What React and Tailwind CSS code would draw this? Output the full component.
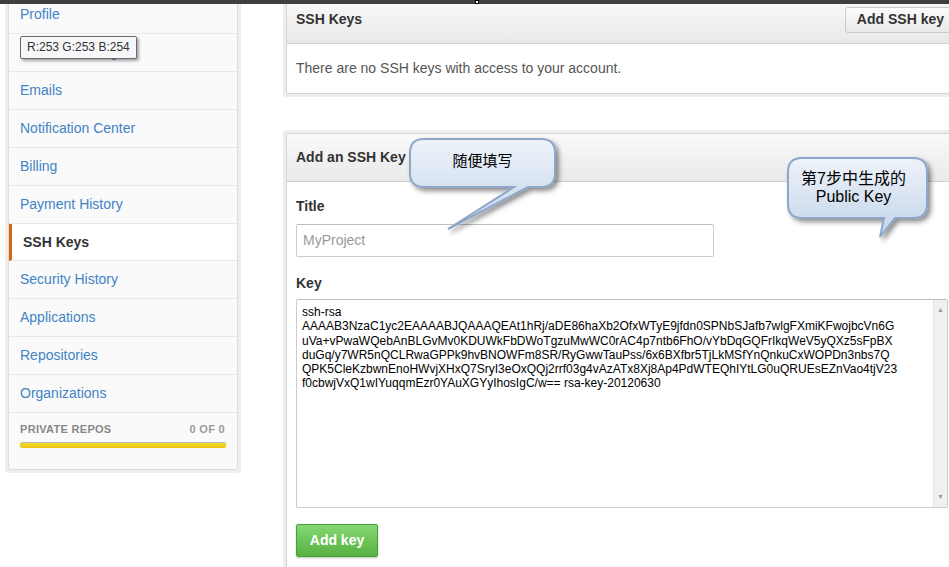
const NAV = [
  "Profile",
  "Account Settings",
  "Emails",
  "Notification Center",
  "Billing",
  "Payment History",
  "SSH Keys",
  "Security History",
  "Applications",
  "Repositories",
  "Organizations",
];

const KEY_LINES = [
  "ssh-rsa",
  "AAAAB3NzaC1yc2EAAAABJQAAAQEAt1hRj/aDE86haXb2OfxWTyE9jfdn0SPNbSJafb7wlgFXmiKFwojbcVn6G",
  "uVa+vPwaWQebAnBLGvMv0KDUWkFbDWoTgzuMwWC0rAC4p7ntb6FhO/vYbDqGQFrIkqWeV5yQXz5sFpBX",
  "duGq/y7WR5nQCLRwaGPPk9hvBNOWFm8SR/RyGwwTauPss/6x6BXfbr5TjLkMSfYnQnkuCxWOPDn3nbs7Q",
  "QPK5CleKzbwnEnoHWvjXHxQ7SryI3eOxQQj2rrf03g4vAzATx8Xj8Ap4PdWTEQhIYtLG0uQRUEsEZnVao4tjV23",
  "f0cbwjVxQ1wIYuqqmEzr0YAuXGYyIhosIgC/w== rsa-key-20120630",
];

function Sidebar() {
  return (
    <div className="ml-[5px] w-[236px] shrink-0 rounded-[4px] bg-[#eeeeee] p-[3px]">
      <div className="relative rounded-[3px] border border-[#dddddd] bg-[#fafafb]">
        {NAV.map((item) =>
          item === "SSH Keys" ? (
            <div
              key={item}
              className="flex h-[37px] items-center border-b border-l-[3px] border-b-[#e8e8e8] border-l-[#d26911] bg-white pl-[11px] text-[14px] font-bold text-[#333]"
            >
              {item}
            </div>
          ) : (
            <div
              key={item}
              className="flex h-[38px] items-center border-b border-[#e8e8e8] pl-[11px] text-[14px] text-[#4183c4]"
            >
              {item}
            </div>
          )
        )}
        <div className="h-[56px] px-[11px] pt-[8px]">
          <div className="flex items-center justify-between text-[11px] font-bold tracking-[0.3px] text-[#888]">
            <span>PRIVATE REPOS</span>
            <span className="mr-[1px] text-[#999]">0 OF 0</span>
          </div>
          <div className="mt-[4px] h-[6px] rounded-[2px] border-t border-[#b8b8b8] bg-gradient-to-b from-[#f6dc2a] to-[#e6c20c]" />
        </div>

        {/* colour picker tooltip over the Account Settings row */}
        <div className="absolute left-[11px] top-[40px] rounded-[2px] border border-[#6b6b6b] bg-[#f7f7f9] px-[6px] py-[3px] text-[12px] leading-[15px] text-[#333] shadow-[2px_2px_3px_rgba(0,0,0,0.35)]">
          R:253 G:253 B:254
        </div>
      </div>
    </div>
  );
}

function Panel({ children }) {
  return (
    <div className="rounded-[4px] bg-[#eeeeee] p-[3px]">
      <div className="overflow-hidden rounded-[3px] border border-[#d5d5d5] bg-white">{children}</div>
    </div>
  );
}

function PanelHeader({ title, children }) {
  return (
    <div className="flex h-[48px] items-center justify-between border-b border-[#cfcfcf] bg-gradient-to-b from-[#fafafa] to-[#e9e9e9] pl-[9px] pr-[3px]">
      <span className="text-[14px] font-bold text-[#333]">{title}</span>
      {children}
    </div>
  );
}

function Callout1() {
  return (
    <div className="absolute left-[400px] top-[130px] h-[110px] w-[170px]">
      <svg width="170" height="110" className="absolute left-0 top-0">
        <defs>
          <linearGradient id="c1" x1="0" y1="0" x2="0" y2="1">
            <stop offset="0" stopColor="#eef3fa" />
            <stop offset="1" stopColor="#c3d4ea" />
          </linearGradient>
          <filter id="s1" x="-20%" y="-20%" width="150%" height="160%">
            <feDropShadow dx="3" dy="3" stdDeviation="2.5" floodColor="#000" floodOpacity="0.45" />
          </filter>
        </defs>
        <path
          d="M24 9 H141 Q155 9 155 23 V43 Q155 57 141 57 H128 L48 99 L114 57 H24 Q10 57 10 43 V23 Q10 9 24 9 Z"
          fill="url(#c1)"
          stroke="#8ea7c9"
          strokeWidth="2"
          filter="url(#s1)"
        />
      </svg>
      <div className="absolute left-[10px] top-[20px] w-[145px] text-center font-['Noto_Sans_CJK_SC',sans-serif] text-[15px] leading-[20px] text-black">
        随便填写
      </div>
    </div>
  );
}

function Callout2() {
  return (
    <div className="absolute left-[780px] top-[150px] h-[100px] w-[169px]">
      <svg width="169" height="100" className="absolute left-0 top-0">
        <defs>
          <linearGradient id="c2" x1="0" y1="0" x2="0" y2="1">
            <stop offset="0" stopColor="#eef3fa" />
            <stop offset="1" stopColor="#c3d4ea" />
          </linearGradient>
          <filter id="s2" x="-20%" y="-20%" width="150%" height="160%">
            <feDropShadow dx="3" dy="3" stdDeviation="2.5" floodColor="#000" floodOpacity="0.45" />
          </filter>
        </defs>
        <path
          d="M22 8 H133 Q147 8 147 22 V54 Q147 68 133 68 H115 L100 87 L104 68 H22 Q8 68 8 54 V22 Q8 8 22 8 Z"
          fill="url(#c2)"
          stroke="#8ea7c9"
          strokeWidth="2"
          filter="url(#s2)"
        />
      </svg>
      <div className="absolute left-[4px] top-[20px] w-[139px] text-center font-['Liberation_Sans','Noto_Sans_CJK_SC',sans-serif] text-[16px] leading-[18px] text-black">
        第7步中生成的
        <br />
        Public Key
      </div>
    </div>
  );
}

export default function App() {
  return (
    <div className="relative h-[567px] w-[949px] overflow-hidden bg-white font-['Liberation_Sans',Arial,sans-serif]">
      <div className="absolute left-0 top-0 z-10 h-[4px] w-full bg-[#3f3f3f]">
        <div className="absolute left-[475px] top-0 h-[4px] w-[4px] border border-black bg-white" />
      </div>

      <div className="-mt-[8px] flex items-start">
        <Sidebar />

        <div className="ml-[42px] w-[680px] shrink-0">
          <Panel>
            <PanelHeader title="SSH Keys">
              <button className="h-[26px] rounded-[3px] border border-[#cacaca] bg-gradient-to-b from-[#fcfcfc] to-[#e8e8e8] px-[11px] text-[14px] font-bold text-[#333]">
                Add SSH key
              </button>
            </PanelHeader>
            <div className="flex h-[49px] items-center px-[9px] text-[14px] text-[#555]">
              There are no SSH keys with access to your account.
            </div>
          </Panel>

          <div className="mt-[33px]">
            <Panel>
              <PanelHeader title="Add an SSH Key" />
              <div className="px-[9px] pb-[20px] pt-[16px]">
                <div className="text-[14px] font-bold leading-[17px] text-[#333]">Title</div>
                <div className="mt-[9px] flex h-[33px] w-[418px] items-center rounded-[2px] border border-[#cccccc] border-t-[#bdbdbd] pl-[6px] text-[14px] text-[#999]">
                  MyProject
                </div>
                <div className="mt-[18px] text-[14px] font-bold leading-[17px] text-[#333]">Key</div>
                <div className="mt-[7px] flex h-[209px] w-[652px] rounded-[2px] border border-[#cccccc] border-t-[#bdbdbd]">
                  <div className="flex-1 whitespace-pre pl-[5px] pt-[5px] text-[12px] leading-[14.3px] text-black">
                    {KEY_LINES.map((l) => (
                      <div key={l}>{l}</div>
                    ))}
                  </div>
                  <div className="flex w-[14px] flex-col items-center justify-between border-l border-[#e4e4e4] bg-[#f0f0f0] py-[6px] text-[7px] leading-[8px] text-[#9a9a9a]">
                    <span>▲</span>
                    <span>▼</span>
                  </div>
                </div>
                <button className="mt-[16px] h-[33px] w-[82px] rounded-[2px] border border-[#4c9e3c] bg-gradient-to-b from-[#84d872] to-[#58b143] text-[14px] font-bold text-white shadow-[0_1px_2px_rgba(0,0,0,0.25)]">
                  Add key
                </button>
              </div>
            </Panel>
          </div>
        </div>
      </div>

      <Callout1 />
      <Callout2 />
    </div>
  );
}
